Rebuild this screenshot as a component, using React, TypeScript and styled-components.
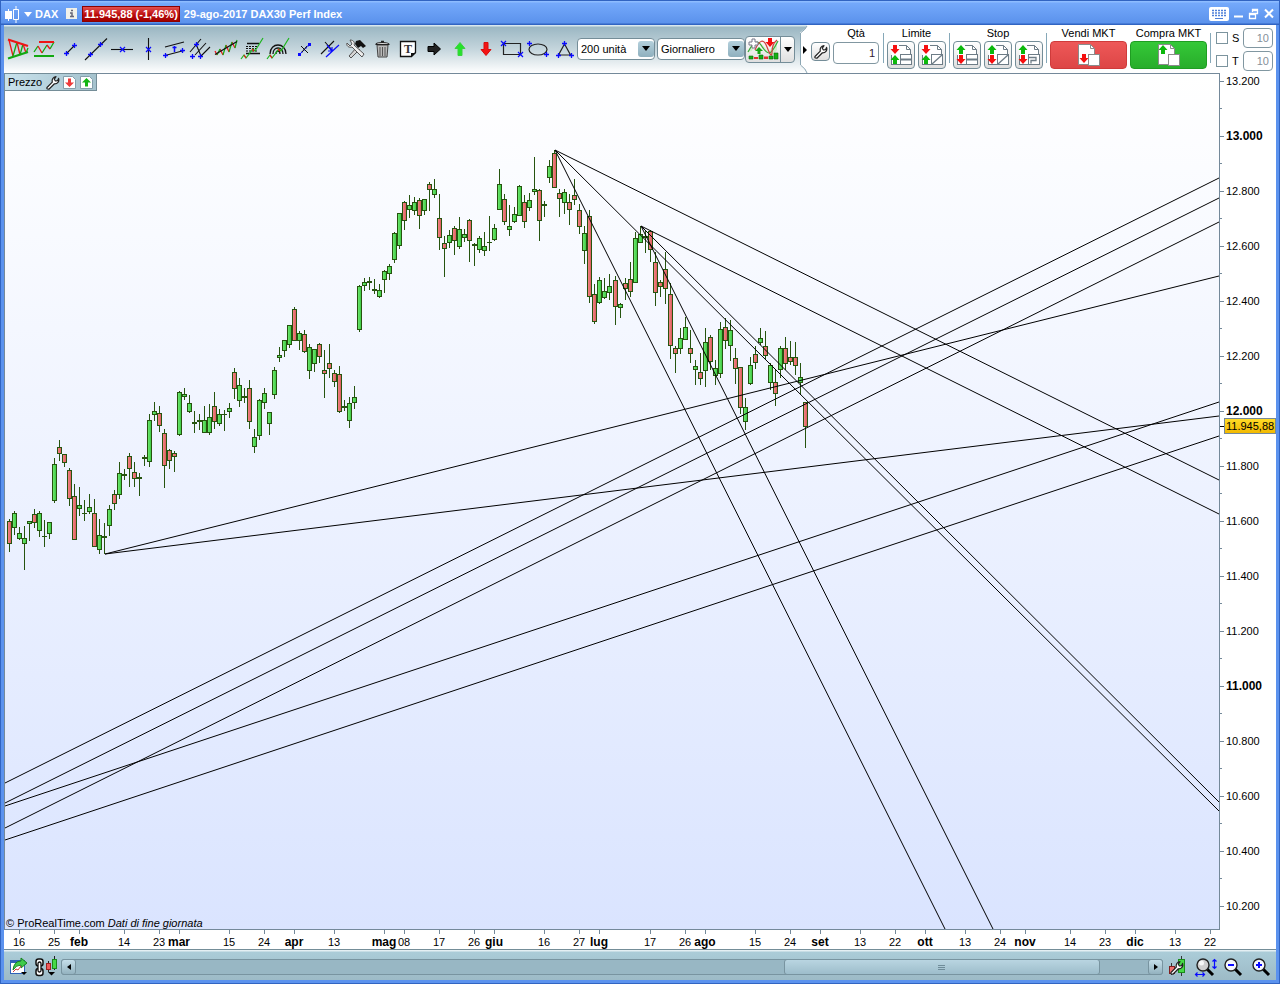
import React from "react";
import styled, { createGlobalStyle, css } from "styled-components";

const GlobalStyle = createGlobalStyle`
  * { box-sizing: border-box; }
  body { margin: 0; background: #fff; font-family: "Liberation Sans", Arial, sans-serif; font-size: 11px; color: #000; }
  button, input, select { font: inherit; color: inherit; margin: 0; padding: 0; }
  svg { display: block; flex: none; }
`;

const WindowFrame = styled.div`
  background: #5b92ee;
  border: 1px solid #3164c2;
  border-top: 0;
  padding: 0 3px 3px;
  min-height: 100vh;
  display: flex;
  flex-direction: column;
`;

const TitleBar = styled.header`
  height: 25px;
  margin: 0 -3px;
  padding: 2px 4px 0 3px;
  display: flex;
  align-items: center;
  color: #fff;
  font-weight: bold;
  background: linear-gradient(#3164c2 0 1px, #8dbcff 1px 2px, #74a9fb 3px, #5b92ec 23px, #3164c2 24px);
`;

const TitleText = styled.span`
  white-space: nowrap;
`;

const Ticker = styled(TitleText)`
  margin: 0 8px 0 3px;
`;

const QuoteBadge = styled.span`
  height: 16px;
  padding: 0 1px;
  margin: 0 4px 0 5px;
  line-height: 15px;
  border: 1px solid #8c0000;
  background: linear-gradient(#e25050, #b80808 60%, #a00000);
  white-space: nowrap;
`;

const PlainButton = styled.button`
  border: 0;
  background: none;
  display: flex;
  align-items: center;
  justify-content: center;
  flex: none;
`;

const WindowButtons = styled.div`
  margin-left: auto;
  display: flex;
  align-items: center;
  gap: 3px;
`;

const Toolbar = styled.div`
  height: 48px;
  display: flex;
  background: linear-gradient(#d9e8ee 0 1px, #9bb7c3 2px, #c4d5dc 24px, #fff 48px);
`;

const Tools = styled.div`
  display: flex;
  align-items: center;
  padding-left: 1px;
`;

const ToolButton = styled(PlainButton)`
  width: 26px;
  height: 28px;
`;

const SelectBox = styled.label<{ $width: number }>`
  position: relative;
  width: ${(p) => p.$width}px;
  height: 22px;
  margin-right: 2px;
  border: 1px solid #748d98;
  border-radius: 4px;
  background: #fff;
  overflow: hidden;
  select {
    appearance: none;
    border: 0;
    width: 100%;
    height: 20px;
    padding-left: 3px;
    background: transparent;
    outline: none;
  }
`;

const SelectArrow = styled.span`
  position: absolute;
  top: 2px;
  right: 0;
  width: 16px;
  height: 16px;
  padding: 5px 4px;
  border-radius: 3px;
  background: linear-gradient(#b4d0dc, #8fb0be);
  pointer-events: none;
`;

const bevel = css`
  border: 1px solid #748d98;
  border-radius: 4px;
  background: linear-gradient(#fff, #dfdfdf);
`;

const IndicatorBox = styled.div`
  ${bevel}
  height: 27px;
  width: 50px;
  margin-left: -2px;
  display: flex;
  button + button { border-left: 1px solid #748d98; width: 14px; }
  button:first-child { width: 34px; }
`;

const Splitter = styled.div`
  width: 12px;
  margin-left: 4px;
  display: flex;
`;

const TradePanel = styled.div`
  flex: 1;
  display: flex;
  gap: 3px;
  padding: 2px 3px 0 0;
  background: #fff;
`;

const Group = styled.div`
  display: flex;
  flex-direction: column;
`;

const QtyGroup = styled(Group)`
  padding-right: 1px;
`;

const Caption = styled.label`
  display: block;
  height: 14px;
  line-height: 13px;
  text-align: center;
  white-space: nowrap;
`;

const Row = styled.div`
  display: flex;
  gap: 3px;
`;

const Separator = styled.div`
  width: 1px;
  height: 30px;
  margin-top: 6px;
  background: #86a8b8;
`;

const WrenchButton = styled(PlainButton)`
  ${bevel}
  width: 19px;
  height: 19px;
  margin-top: 15px;
`;

const NumberField = styled.input<{ $width: number; $dim?: boolean }>`
  width: ${(p) => p.$width}px;
  height: ${(p) => (p.$dim ? 20 : 22)}px;
  border: 1px solid #8197a1;
  border-radius: 4px;
  background: #fff;
  padding-right: 3px;
  text-align: right;
  color: ${(p) => (p.$dim ? "#85909a" : "#301830")};
`;

const QtyField = styled(NumberField)`
  margin-top: 1px;
`;

const OrderButton = styled(PlainButton)`
  ${bevel}
  width: 28px;
  height: 28px;
`;

const MarketButton = styled(PlainButton)<{ $tone: "sell" | "buy" }>`
  width: 77px;
  height: 28px;
  border-radius: 4px;
  border: 1px solid ${(p) => (p.$tone === "sell" ? "#cf3b3b" : "#1f9d22")};
  background: ${(p) =>
    p.$tone === "sell" ? "linear-gradient(#ee5858, #dd4646)" : "linear-gradient(#35c838, #28ad2b)"};
`;

const Options = styled.div`
  display: flex;
  flex-direction: column;
  gap: 3px;
  padding: 1px 0 0 2px;
`;

const OptionRow = styled.div`
  display: flex;
  align-items: center;
  label { width: 15px; padding-left: 4px; }
`;

const CheckBox = styled.input`
  appearance: none;
  width: 12px;
  height: 12px;
  border: 1px solid #7c949e;
  background: #fff;
`;

const ChartArea = styled.main`
  position: relative;
  background: #fff;
  > svg { width: 100%; height: auto; }
`;

const PriceTab = styled.div`
  position: absolute;
  top: 0;
  left: 0;
  height: 18px;
  padding: 0 3px 0 3px;
  display: flex;
  align-items: center;
  gap: 3px;
  border: 1px solid #748d98;
  background: linear-gradient(90deg, #c9e2ec, #a5c2cd);
  button + button + button { margin-left: 1px; }
`;

const BottomBar = styled.footer`
  height: 31px;
  display: flex;
  align-items: center;
  padding: 4px 1px 0 4px;
  border-top: 1px solid #748d98;
  background: linear-gradient(#e4eff3 0 1px, #abccd8 2px, #9dbbc7 29px);
`;

const ScrollBar = styled.div`
  flex: 1;
  display: flex;
  height: 16px;
  margin-left: 3px;
  background: #98b7c4;
  border: 1px solid #7894a0;
  border-radius: 3px;
`;

const ScrollArrow = styled(PlainButton)`
  width: 15px;
  height: 16px;
  margin: -1px;
  border: 1px solid #7894a0;
  border-radius: 3px;
  background: linear-gradient(#c5dfea, #93b2bf);
`;

const Track = styled.div`
  flex: 1;
  display: grid;
  grid-template-columns: 706fr 315fr 49fr;
`;

const Thumb = styled.div`
  grid-column: 2;
  height: 16px;
  margin-top: -1px;
  border: 1px solid #7894a0;
  border-radius: 3px;
  background: linear-gradient(#b9d5e1, #9dbdcb);
  display: flex;
  align-items: center;
  justify-content: center;
`;

const BottomButton = styled(PlainButton)`
  width: 28px;
  height: 24px;
`;

/* ---------- icons ---------- */

const RED = "#ee1515";
const GREEN = "#12a812";
const BLUE = "#0a0aff";
const PAGE = "#6d7c86";

const Icon = ({ children, w = 24, h = 24 }: { children: React.ReactNode; w?: number; h?: number }) => (
  <svg width={w} height={h} viewBox={`0 0 ${w} ${h}`} fill="none" aria-hidden="true">
    {children}
  </svg>
);

const Plus = ({ x, y }: { x: number; y: number }) => (
  <path d={`M${x - 2} ${y + 0.5}h5M${x + 0.5} ${y - 2}v5`} stroke={BLUE} strokeWidth="1.3" />
);
const Cross = ({ x, y }: { x: number; y: number }) => (
  <path d={`M${x - 2} ${y - 2}l5 5m0-5l-5 5`} stroke={BLUE} strokeWidth="1.2" />
);
const Dot = ({ x, y }: { x: number; y: number }) => (
  <rect x={x - 1} y={y - 1} width="3" height="3" fill={BLUE} />
);
const Black = ({ d, w = 1.1 }: { d: string; w?: number }) => <path d={d} stroke="#111" strokeWidth={w} />;

const WrenchShape = () => (
  <path
    d="M2 12.5L7.3 7.2C6.7 4.4 8 2 11 1.6L9.3 4.2 10.4 6 12.6 5.6 13.6 3.4C14.6 6.6 12.4 9 9.4 8.8L3.9 14.2Q1.3 14.4 2 12.5Z"
    fill="#fff"
    stroke="#222"
    strokeWidth="1.2"
    strokeLinejoin="round"
  />
);

const Up = ({ x, y }: { x: number; y: number }) => (
  <path d={`M${x} ${y}l4.5 5h-2.500v4h-4v-4h-2.500z`} fill="#0cb80c" />
);
const Down = ({ x, y }: { x: number; y: number }) => (
  <path d={`M${x} ${y}l4.5-5h-2.500v-4h-4v4h-2.500z`} fill="#f50f0f" />
);

const TOOLS: { label: string; art: React.ReactNode }[] = [
  {
    label: "Triangolo di tendenza",
    art: (
      <>
        <path d="M3 3l4 16M11 5l3 13M17 7l3 9" stroke={RED} strokeWidth="1.3" />
        <path d="M7 19l4-14M14 18l3-11M20 16l2-5" stroke={GREEN} strokeWidth="1.3" />
        <path d="M2 2.5l20 6.500" stroke={RED} strokeWidth="2.2" />
        <path d="M2 21.5l20-6.500" stroke={GREEN} strokeWidth="2.2" />
      </>
    ),
  },
  {
    label: "Supporti e resistenze",
    art: (
      <>
        <path d="M2 15l4-6M10 16l5-8M18 12l4-7" stroke={GREEN} strokeWidth="1.3" />
        <path d="M6 9l4 7M15 8l3 4" stroke={RED} strokeWidth="1.3" />
        <path d="M7 5h15" stroke={RED} strokeWidth="2" />
        <path d="M2 19h20" stroke={GREEN} strokeWidth="2" />
      </>
    ),
  },
  { label: "Segmento", art: <><Black d="M8 17l9-9" /><Plus x={8} y={16} /><Plus x={16} y={8} /></> },
  { label: "Retta", art: <><Black d="M1 23L23 1.5" /><Plus x={6} y={17} /><Plus x={16} y={7} /></> },
  { label: "Linea orizzontale", art: <><Black d="M1 12.5h22" /><Cross x={12} y={12} /></> },
  { label: "Linea verticale", art: <><Black d="M12.5 1v22" /><Cross x={12} y={12} /></> },
  {
    label: "Canale",
    art: (
      <>
        <Black d="M3 10l19-5M3 18.5l19-5" />
        <path d="M12.5 9v6M10.5 10.5h4" stroke={BLUE} strokeWidth="1.5" />
        <Plus x={3} y={18} /><Plus x={20} y={13} />
      </>
    ),
  },
  {
    label: "Forchetta",
    art: (
      <>
        <Black d="M2 15L13 2M8 7l5 12M7 18L18 6M13 19l9-9" />
        <Plus x={8} y={7} /><Plus x={4} y={19} /><Plus x={12} y={19} />
      </>
    ),
  },
  {
    label: "Regressione lineare",
    art: (
      <>
        <path d="M1 14l2 4M6 12l3 6M12 8l3 7M18 5l3 6" stroke={RED} strokeWidth="1.2" />
        <path d="M3 18l3-6M9 18l3-10M15 15l3-10M21 11l2-8" stroke={GREEN} strokeWidth="1.2" />
        <Black d="M1 17.5L23 4.5" w={1.3} />
      </>
    ),
  },
  {
    label: "Ritracciamenti di Fibonacci",
    art: (
      <>
        <Black d="M7 6.5h12M6 16.5h14" w={1.6} />
        <path d="M6 9.5h12M6 11.5h12M6 14h12" stroke="#111" strokeWidth="1.2" strokeDasharray="2 1" />
        <path d="M1 22l3-4 2 3 7-9 2 2 8-13" stroke="#1db51d" strokeWidth="1.2" />
        <path d="M4 18l2 3M12 12l2 2" stroke={RED} strokeWidth="1.2" />
      </>
    ),
  },
  {
    label: "Archi di Fibonacci",
    art: (
      <>
        <Black d="M4 17c0-12 16-12 16 0M7 17c0-8 10-8 10 0M10 17c0-4 4-4 4 0" w={1.3} />
        <path d="M1 22l3-4 2 3 7-9 2 2 8-13" stroke="#1db51d" strokeWidth="1.2" />
        <path d="M4 18l2 3M12 12l2 2" stroke={RED} strokeWidth="1.2" />
      </>
    ),
  },
  {
    label: "Estensione",
    art: (
      <>
        <path d="M7 18L18 7" stroke={BLUE} strokeWidth="1.2" strokeDasharray="2 1" />
        <Black d="M9 9l7 7M10 15l5-6" w={1} />
        <Dot x={7} y={17} /><Dot x={17} y={7} />
      </>
    ),
  },
  {
    label: "Parallela",
    art: (
      <>
        <Black d="M3 17L16 4M7 5l7 8" />
        <path d="M8 20L21 8M9 8l5 6M14 10v4h-4" stroke={BLUE} strokeWidth="1.2" />
      </>
    ),
  },
  {
    label: "Strumenti",
    art: (
      <>
        <path d="M13 10L5 19l2 2 9-9" fill="#d4d4d4" stroke="#555" />
        <path d="M12 4l4-1 6 6-3 2-2-2-3 2-3-4z" fill="#111" />
        <path d="M3 6l3 3 2-2-2-4c4 0 5 3 4 5l10 9-2 3-10-10c-3 1-6-1-5-4z" fill="#eee" stroke="#555" />
      </>
    ),
  },
  {
    label: "Elimina",
    art: (
      <>
        <path d="M7 8h11l-1 12H8z" fill="#b9b9b9" stroke="#444" />
        <path d="M10 10v9M12.5 10v9M15 10v9" stroke="#555" />
        <path d="M6 7.5q0-2 6.500-2t6.500 2z" fill="#ddd" stroke="#222" strokeWidth="1.2" />
        <path d="M11 4.5h3" stroke="#222" strokeWidth="1.5" />
      </>
    ),
  },
  {
    label: "Testo",
    art: (
      <>
        <path d="M4.5 4.5h15v11l-4 4h-11z" fill="#fff" stroke="#111" strokeWidth="1.3" />
        <path d="M15 20v-4h5z" fill="#111" />
        <text x="12" y="16" textAnchor="middle" fontFamily="Liberation Serif, serif" fontWeight="bold" fontSize="12" fill="#333">T</text>
      </>
    ),
  },
  { label: "Freccia destra", art: <path d="M6 9.5h6V6l6.500 6-6.500 6v-3.500H6z" fill="#222" stroke="#000" /> },
  { label: "Freccia su", art: <path d="M12 5.5l5 6h-3v7h-4v-7H7z" fill="#26e22b" stroke="#3bd23f" /> },
  { label: "Freccia giù", art: <path d="M12 18.5l5-6h-3v-7h-4v7H7z" fill="#f31414" stroke="#d80c0c" /> },
  { label: "Rettangolo", art: <><path d="M3.5 6.5h17v11h-17z" stroke="#222" strokeWidth="1.2" /><Cross x={3} y={6} /><Cross x={20} y={17} /></> },
  { label: "Ellisse", art: <><ellipse cx="12" cy="12.5" rx="9" ry="5.5" stroke="#222" strokeWidth="1.2" /><Plus x={3} y={6} /><Plus x={20} y={17} /></> },
  { label: "Triangolo", art: <><path d="M12.5 7l6 11h-12z" stroke="#222" strokeWidth="1.2" /><Plus x={12} y={6} /><Plus x={6} y={18} /><Plus x={19} y={18} /></> },
];

const ArrowDown = () => (
  <Icon w={8} h={5}><path d="M0 0h8L4 5z" fill="#000" /></Icon>
);

const OrderIcon = ({ first, extra }: { first: "up" | "down"; extra: "line" | "slash" | "step" }) => (
  <Icon>
    <path d="M2.5 21.5v-19h15l4 4v5H12v10z" fill="#fff" />
    <path d="M10 2.5h7.5l4 4V12M2.5 22V12M2.5 21.5h9M17.500 2.500v4h4" stroke={PAGE} />
    {first === "down" ? <><Down x={6} y={11} /><Up x={6} y={12} /></> : <><Up x={6} y={2} /><Down x={6} y={21} /></>}
    <rect x="11.5" y="11.5" width="11" height="10" fill="#fff" stroke={PAGE} />
    {extra === "line" && <path d="M12 16.5h10" stroke={PAGE} strokeWidth="2" />}
    {extra === "slash" && <path d="M12 21l10-9" stroke={PAGE} strokeWidth="1.3" />}
    {extra === "step" && <path d="M12 14.5h7v3h-5v3" stroke={PAGE} strokeWidth="1.3" />}
  </Icon>
);

const MarketIcon = ({ buy }: { buy?: boolean }) => (
  <Icon>
    <path d="M1.5 1.5h12l4 4v16h-16z" fill="#fff" stroke="#8b8b8b" />
    <path d="M13.5 1.5v4h4" stroke="#8b8b8b" />
    {buy ? <Up x={6} y={2} /> : <Down x={7} y={20} />}
    <rect x="11.5" y="11.5" width="11" height="11" fill="#fff" stroke="#8b8b8b" />
  </Icon>
);

const PageArrow = ({ up }: { up?: boolean }) => (
  <Icon w={13} h={13}>
    <path d="M.5.5h9l3 3v9H.5z" fill="#fff" stroke="#849eab" />
    {up ? <path d="M6.5 2l4.500 4.500h-3v4h-3v-4H2z" fill="#14b414" /> : <path d="M6.5 11l4.500-4.500h-3v-4h-3v4H2z" fill="#ee3a3a" />}
  </Icon>
);

const Magnifier = ({ sign, big }: { sign?: "+" | "-"; big?: boolean }) => (
  <Icon>
    <path d="M14 14l6 6" stroke="#000" strokeWidth="3" />
    <circle cx="10" cy="10" r="6" fill={big ? "#cfcfcf" : "#f4f6fb"} stroke="#222" strokeWidth="1.4" />
    {big && <circle cx="8.5" cy="8" r="2.5" fill="#f7f7f7" />}
    {sign && <path d={sign === "+" ? "M7 10h6M10 7v6" : "M7 10h6"} stroke={BLUE} strokeWidth="2" />}
    {big && <path d="M21.5 5v8M19.5 6.5l2-2 2 2M19.5 11.5l2 2 2-2M3 19.5h8M4.5 17.5l-2 2 2 2M9.5 17.5l2 2-2 2" stroke={BLUE} strokeWidth="1.2" />}
  </Icon>
);

/* ---------- chart data: centre x, high, body top, body bottom, low, tone ---------- */

type Candle = [number, number, number, number, number, "g" | "r"];

const CANDLES: Candle[] = [
  [9, 519, 521, 544, 552, "r"], [14, 511, 513, 528, 535, "g"], [19, 527, 533, 539, 540, "g"], [24, 526, 538, 544, 570, "g"],
  [29, 521, 521, 524, 541, "g"], [34, 509, 514, 523, 528, "r"], [39, 511, 513, 531, 537, "g"], [44, 520, 536, 537, 547, "g"],
  [49, 522, 522, 534, 539, "g"], [54, 458, 464, 501, 503, "g"], [59, 440, 447, 454, 461, "r"], [64, 454, 454, 463, 467, "r"],
  [69, 468, 470, 499, 506, "r"], [74, 484, 496, 540, 540, "r"], [79, 487, 505, 509, 516, "g"], [84, 500, 513, 514, 521, "g"],
  [89, 494, 507, 512, 514, "g"], [94, 499, 513, 547, 547, "r"], [99, 519, 535, 550, 554, "g"], [104, 523, 536, 538, 554, "g"],
  [109, 505, 509, 526, 536, "g"], [114, 490, 494, 504, 510, "r"], [119, 462, 473, 495, 499, "g"], [124, 469, 474, 476, 480, "g"],
  [129, 453, 456, 469, 487, "r"], [134, 462, 472, 479, 487, "r"], [139, 473, 477, 479, 496, "g"], [144, 455, 457, 459, 466, "g"],
  [149, 414, 420, 462, 467, "g"], [154, 402, 411, 415, 421, "g"], [159, 406, 413, 426, 432, "r"], [164, 429, 433, 466, 488, "r"],
  [169, 449, 450, 461, 469, "r"], [174, 451, 453, 457, 472, "r"], [179, 391, 392, 435, 436, "g"], [184, 388, 394, 397, 400, "g"],
  [189, 395, 403, 412, 413, "g"], [194, 411, 422, 424, 433, "g"], [199, 414, 420, 422, 430, "g"], [204, 406, 420, 433, 433, "g"],
  [209, 404, 417, 433, 435, "g"], [214, 392, 406, 422, 429, "r"], [219, 409, 414, 424, 426, "g"], [224, 410, 414, 415, 431, "g"],
  [229, 403, 408, 412, 418, "g"], [234, 368, 372, 389, 399, "r"], [239, 378, 385, 401, 407, "g"], [244, 388, 396, 398, 403, "g"],
  [249, 380, 388, 422, 429, "r"], [254, 429, 437, 447, 453, "g"], [259, 399, 400, 436, 440, "g"], [264, 388, 393, 403, 409, "g"],
  [269, 412, 412, 424, 435, "g"], [274, 367, 370, 395, 399, "g"], [279, 347, 355, 358, 362, "g"], [284, 340, 340, 351, 357, "g"],
  [289, 325, 325, 345, 348, "g"], [294, 307, 309, 341, 341, "r"], [299, 331, 333, 341, 350, "g"], [304, 330, 334, 352, 353, "r"],
  [309, 344, 347, 371, 379, "g"], [314, 349, 349, 364, 372, "g"], [319, 343, 344, 357, 363, "r"], [324, 350, 370, 374, 398, "r"],
  [329, 344, 363, 369, 378, "r"], [334, 370, 373, 382, 387, "r"], [339, 366, 374, 412, 413, "r"], [344, 400, 406, 408, 411, "g"],
  [349, 397, 403, 421, 428, "g"], [354, 386, 397, 403, 409, "g"], [359, 285, 286, 330, 332, "g"], [364, 278, 282, 286, 291, "g"],
  [369, 277, 281, 283, 290, "g"], [374, 279, 289, 291, 294, "g"], [379, 284, 290, 297, 298, "g"], [384, 270, 271, 280, 293, "g"],
  [389, 264, 266, 274, 280, "g"], [394, 232, 233, 260, 263, "g"], [399, 213, 213, 246, 249, "g"], [404, 201, 202, 221, 230, "r"],
  [409, 195, 205, 210, 218, "g"], [414, 197, 202, 211, 215, "g"], [419, 198, 200, 216, 229, "r"], [424, 199, 199, 211, 215, "g"],
  [429, 182, 184, 190, 211, "r"], [434, 179, 189, 195, 198, "g"], [439, 194, 218, 238, 250, "r"], [444, 236, 243, 249, 277, "r"],
  [449, 230, 235, 243, 248, "g"], [454, 226, 228, 241, 255, "r"], [459, 217, 229, 247, 249, "g"], [464, 229, 234, 238, 242, "g"],
  [469, 219, 220, 241, 262, "r"], [474, 243, 244, 246, 266, "g"], [479, 236, 238, 250, 253, "g"], [484, 232, 246, 251, 256, "g"],
  [489, 216, 242, 243, 251, "g"], [494, 224, 228, 240, 241, "g"], [499, 169, 184, 210, 210, "g"], [504, 194, 199, 222, 225, "r"],
  [509, 205, 226, 230, 236, "g"], [514, 207, 214, 222, 223, "g"], [519, 185, 186, 216, 216, "g"], [524, 195, 202, 222, 228, "r"],
  [529, 193, 200, 208, 211, "g"], [534, 157, 189, 192, 195, "g"], [539, 189, 190, 221, 241, "r"], [544, 201, 204, 206, 217, "g"],
  [549, 160, 166, 178, 183, "g"], [554, 150, 153, 188, 188, "r"], [559, 189, 193, 199, 217, "r"], [564, 189, 192, 203, 214, "g"],
  [569, 194, 202, 210, 225, "r"], [574, 179, 195, 200, 205, "r"], [579, 204, 210, 227, 234, "r"], [584, 226, 233, 251, 264, "g"],
  [589, 210, 216, 297, 303, "r"], [594, 284, 294, 322, 324, "r"], [599, 277, 280, 303, 304, "g"], [604, 278, 291, 298, 299, "g"],
  [609, 274, 286, 293, 300, "g"], [615, 276, 280, 307, 325, "r"], [620, 303, 304, 308, 318, "g"], [625, 278, 283, 289, 300, "r"],
  [630, 262, 279, 292, 297, "r"], [635, 232, 238, 283, 283, "g"], [640, 226, 234, 243, 243, "g"], [645, 230, 236, 238, 253, "r"],
  [650, 230, 231, 250, 262, "r"], [655, 252, 262, 293, 306, "r"], [660, 280, 282, 287, 297, "r"], [665, 252, 269, 289, 304, "r"],
  [670, 283, 294, 346, 359, "r"], [675, 346, 348, 354, 373, "r"], [680, 328, 338, 349, 354, "g"], [685, 317, 327, 340, 340, "g"],
  [690, 330, 348, 354, 363, "r"], [695, 360, 366, 370, 385, "g"], [700, 353, 372, 379, 385, "r"], [705, 328, 342, 371, 387, "g"],
  [710, 335, 337, 362, 370, "r"], [715, 360, 368, 376, 385, "g"], [720, 322, 329, 374, 378, "g"], [725, 318, 327, 341, 349, "r"],
  [730, 320, 330, 346, 361, "g"], [735, 348, 358, 369, 384, "r"], [740, 367, 367, 408, 414, "r"], [745, 398, 407, 422, 430, "g"],
  [750, 357, 365, 384, 385, "g"], [755, 346, 354, 363, 369, "r"], [760, 328, 338, 343, 345, "g"], [765, 331, 346, 356, 360, "r"],
  [770, 363, 365, 383, 390, "g"], [775, 370, 382, 394, 406, "r"], [780, 346, 348, 370, 378, "g"], [785, 337, 348, 364, 370, "r"],
  [790, 341, 357, 362, 365, "r"], [795, 342, 357, 366, 375, "r"], [800, 363, 377, 383, 395, "g"], [805, 402, 402, 427, 448, "r"],
];

const TRENDS: [number, number, number, number][] = [
  [555, 150, 1219, 480], [555, 150, 1219, 811], [555, 150, 945, 929],
  [641, 226, 1219, 514], [641, 226, 1219, 802], [641, 226, 993, 929],
  [5, 783, 1219, 178], [5, 803, 1219, 198], [5, 828, 1219, 222],
  [105, 554, 1219, 276], [105, 554, 1219, 416],
  [5, 806, 1219, 402], [5, 840, 1219, 436],
];

const PRICES = Array.from({ length: 16 }, (_, i) => 13200 - i * 200);

const DATES: [number, string][] = [
  [19, "16"], [54, "25"], [79, "feb"], [124, "14"], [159, "23"], [179, "mar"], [229, "15"], [264, "24"], [294, "apr"],
  [334, "13"], [384, "mag"], [404, "08"], [439, "17"], [474, "26"], [494, "giu"], [544, "16"], [579, "27"], [599, "lug"],
  [650, "17"], [685, "26"], [705, "ago"], [755, "15"], [790, "24"], [820, "set"], [860, "13"], [895, "22"], [925, "ott"],
  [965, "13"], [1000, "24"], [1025, "nov"], [1070, "14"], [1105, "23"], [1135, "dic"], [1175, "13"], [1210, "22"],
];

const AxisText = styled.text<{ $strong?: boolean }>`
  font-size: ${(p) => (p.$strong ? 12 : 11)}px;
  font-weight: ${(p) => (p.$strong ? "bold" : "normal")};
`;

const formatPrice = (p: number) => `${Math.floor(p / 1000)}.${String(p % 1000).padStart(3, "0")}`;

const Chart = () => (
  <svg viewBox="4 73 1272 876" role="img" aria-label="Grafico DAX giornaliero">
    <defs>
      <linearGradient id="sky" x1="0" y1="0" x2="0" y2="1">
        <stop offset="0" stopColor="#ffffff" />
        <stop offset="1" stopColor="#dae4ff" />
      </linearGradient>
      <linearGradient id="rise"><stop offset="0" stopColor="#6ee86e" /><stop offset="1" stopColor="#3fcb45" /></linearGradient>
      <linearGradient id="fall"><stop offset="0" stopColor="#f28585" /><stop offset="1" stopColor="#dc5e5e" /></linearGradient>
      <linearGradient id="tag" x1="0" y1="0" x2="0" y2="1"><stop offset="0" stopColor="#ffdc28" /><stop offset="1" stopColor="#f2b800" /></linearGradient>
    </defs>
    <rect x="4" y="73" width="1216" height="857" fill="#74899a" />
    <rect x="5" y="74" width="1214" height="855" fill="url(#sky)" />
    <g shapeRendering="crispEdges">
      {CANDLES.map(([x, high, top, bottom, low, tone]) => (
        <g key={x}>
          <rect x={x} y={high} width="1" height={low - high} fill="#26540f" />
          <rect x={x - 2} y={top} width="5" height={bottom - top} fill="#26540f" />
          {bottom - top > 2 && (
            <rect x={x - 1} y={top + 1} width="3" height={bottom - top - 2} fill={tone === "g" ? "url(#rise)" : "url(#fall)"} />
          )}
        </g>
      ))}
    </g>
    {TRENDS.map(([x1, y1, x2, y2], i) => (
      <line key={i} x1={x1} y1={y1} x2={x2} y2={y2} stroke="#000" />
    ))}
    <g shapeRendering="crispEdges" fill="#74899a">
      {PRICES.map((p, i) => (
        <g key={p}>
          <rect x="1220" y={81 + i * 55} width="4" height="1" />
          {i < 15 && <rect x="1220" y={108 + i * 55} width="2" height="1" />}
        </g>
      ))}
      {DATES.map(([x]) => <rect key={x} x={x} y="930" width="1" height="4" />)}
    </g>
    {PRICES.map((p, i) => (
      <AxisText key={p} x="1226" y={85 + i * 55} $strong={p % 1000 === 0}>{formatPrice(p)}</AxisText>
    ))}
    {DATES.map(([x, t]) => (
      <AxisText key={x} x={x} y="946" textAnchor="middle" $strong={/[a-z]/.test(t)}>{t}</AxisText>
    ))}
    <path d="M1220 426.5h4" stroke="#000" />
    <rect x="1224.5" y="418.5" width="51" height="15" fill="url(#tag)" stroke="#74899a" />
    <AxisText x="1226" y="430">11.945,88</AxisText>
    <AxisText x="6" y="927">
      © ProRealTime.com
      <tspan dx="3" fontStyle="italic">Dati di fine giornata</tspan>
    </AxisText>
  </svg>
);

export default function App() {
  return (
    <>
      <GlobalStyle />
      <WindowFrame>
        <TitleBar>
          <PlainButton aria-label="Tipo di grafico">
            <Icon w={28} h={18}>
              <path d="M1 6h7v8H1zM4 4h1v12H4z" fill="#fff" />
              <path d="M9.5 4.5h5v10h-5zM12 1v3M12 15v3" stroke="#fff" />
              <path d="M20 7h8l-4 5z" fill="#fff" />
            </Icon>
          </PlainButton>
          <Ticker>DAX</Ticker>
          <PlainButton aria-label="Informazioni">
            <Icon w={11} h={11}>
              <rect width="11" height="11" fill="#f1f1ea" />
              <path d="M4 5h2v3M4 8.5h4M5 2.5h2" stroke="#667" strokeWidth="1.5" />
            </Icon>
          </PlainButton>
          <QuoteBadge>11.945,88 (-1,46%)</QuoteBadge>
          <TitleText>29-ago-2017 DAX30 Perf Index</TitleText>
          <WindowButtons>
            <PlainButton aria-label="Tastiera">
              <Icon w={20} h={14}>
                <rect width="20" height="14" rx="2" fill="#fff" />
                <path d="M3 3.5h14M3 6h14M3 8.5h14" stroke="#4f80d8" strokeWidth="1.5" strokeDasharray="2 1" />
                <path d="M6 11.5h8" stroke="#4f80d8" />
              </Icon>
            </PlainButton>
            <PlainButton aria-label="Riduci"><Icon w={13} h={14}><path d="M2 9.5h9" stroke="#fff" strokeWidth="2" /></Icon></PlainButton>
            <PlainButton aria-label="Ripristina">
              <Icon w={12} h={14}>
                <path d="M4.5 5V2.5h5v4H8M4 3.5h6M1.5 6.5h6v5h-6zM1 7.5h7" stroke="#fff" strokeWidth="1.3" />
              </Icon>
            </PlainButton>
            <PlainButton aria-label="Chiudi"><Icon w={12} h={14}><path d="M2 2.5l8 8m0-8l-8 8" stroke="#fff" strokeWidth="2" /></Icon></PlainButton>
          </WindowButtons>
        </TitleBar>

        <Toolbar>
          <Tools>
            {TOOLS.map((t) => (
              <ToolButton key={t.label} aria-label={t.label}><Icon>{t.art}</Icon></ToolButton>
            ))}
            <SelectBox $width={78}>
              <select aria-label="Unità"><option>200 unità</option></select>
              <SelectArrow><ArrowDown /></SelectArrow>
            </SelectBox>
            <SelectBox $width={88}>
              <select aria-label="Periodo"><option>Giornaliero</option></select>
              <SelectArrow><ArrowDown /></SelectArrow>
            </SelectBox>
            <IndicatorBox>
              <PlainButton aria-label="Aggiungi indicatore">
                <Icon w={32} h={24}>
                  <path d="M1 15q7-15 13-6t8 6 8-12v10q-5 8-9 2t-8-9-8 8z" fill="#cfeccb" />
                  <path d="M1 15q8-15 13-7t8 8 9-12" stroke="#35a835" strokeWidth="1.2" />
                  <path d="M8 13q7-16 12-3t5 5 5-12" stroke="#cf3f3f" strokeWidth="1.2" />
                  <path d="M5 2h3v3h3v3H8v3H5V8H2V5h3z" fill="#fff" stroke="#778" />
                  <Down x={23} y={10} />
                  <path d="M12 10l4 4h-2.500v3h-3v-3H8z" fill="#14a414" />
                  <path d="M2 19h4v3H2zM12 18h4v4h-4zM22 19h4v3h-4zM27 16h4v6h-4z" fill="#13b013" stroke="#0a6a0a" strokeWidth=".6" />
                  <path d="M7 20h4v2H7zM17 19.5h4V22h-4z" fill="#e03030" />
                </Icon>
              </PlainButton>
              <PlainButton aria-label="Altri indicatori"><ArrowDown /></PlainButton>
            </IndicatorBox>
          </Tools>
          <Splitter>
            <Icon w={12} h={48}>
              <path d="M8 0Q8 3 1 7.5v33Q8 44 8 48H12V0z" fill="#fff" />
              <path d="M8 1Q7 4 1.5 8v32Q7 44 8 48" stroke="#8ba6b3" />
              <path d="M4 21l4 4-4 4z" fill="#000" />
            </Icon>
          </Splitter>
          <TradePanel>
            <WrenchButton aria-label="Impostazioni ordini"><Icon w={15} h={15}><WrenchShape /></Icon></WrenchButton>
            <QtyGroup>
              <Caption htmlFor="qty">Qtà</Caption>
              <QtyField id="qty" $width={46} defaultValue="1" />
            </QtyGroup>
            <Separator />
            <Group>
              <Caption as="span">Limite</Caption>
              <Row>
                <OrderButton aria-label="Limite 1"><OrderIcon first="down" extra="line" /></OrderButton>
                <OrderButton aria-label="Limite 2"><OrderIcon first="down" extra="slash" /></OrderButton>
              </Row>
            </Group>
            <Separator />
            <Group>
              <Caption as="span">Stop</Caption>
              <Row>
                <OrderButton aria-label="Stop 1"><OrderIcon first="up" extra="line" /></OrderButton>
                <OrderButton aria-label="Stop 2"><OrderIcon first="up" extra="slash" /></OrderButton>
                <OrderButton aria-label="Stop 3"><OrderIcon first="up" extra="step" /></OrderButton>
              </Row>
            </Group>
            <Separator />
            <Group>
              <Caption htmlFor="sell">Vendi MKT</Caption>
              <MarketButton id="sell" $tone="sell"><MarketIcon /></MarketButton>
            </Group>
            <Group>
              <Caption htmlFor="buy">Compra MKT</Caption>
              <MarketButton id="buy" $tone="buy"><MarketIcon buy /></MarketButton>
            </Group>
            <Separator />
            <Options>
              {["S", "T"].map((k) => (
                <OptionRow key={k}>
                  <CheckBox type="checkbox" id={`opt${k}`} />
                  <label htmlFor={`opt${k}`}>{k}</label>
                  <NumberField $width={30} $dim defaultValue="10" aria-label={`Valore ${k}`} />
                </OptionRow>
              ))}
            </Options>
          </TradePanel>
        </Toolbar>

        <ChartArea>
          <Chart />
          <PriceTab>
            <span>Prezzo</span>
            <PlainButton aria-label="Impostazioni prezzo"><Icon w={15} h={15}><WrenchShape /></Icon></PlainButton>
            <PlainButton aria-label="Sposta giù"><PageArrow /></PlainButton>
            <PlainButton aria-label="Sposta su"><PageArrow up /></PlainButton>
          </PriceTab>
        </ChartArea>

        <BottomBar>
          <PlainButton aria-label="Condividi">
            <Icon>
              <rect x="2.5" y="5.5" width="14" height="13" fill="#fff" stroke="#2f62b8" />
              <path d="M3 7h13" stroke="#2f62b8" strokeWidth="2" />
              <path d="M5 15q1-9 8-9V3l6 5-6 5v-3q-5 0-8 5z" fill="#3fcb4a" stroke="#16801f" />
              <path d="M5 17l3-3 2 1 3-4" stroke="#d43b3b" />
              <path d="M13 17h6l-3 3z" fill="#000" />
            </Icon>
          </PlainButton>
          <PlainButton aria-label="Collega">
            <Icon w={26}>
              <rect x="4" y="4" width="7" height="7" rx="2.5" fill="#fff" stroke="#111" strokeWidth="1.5" />
              <rect x="4" y="13.5" width="7" height="7" rx="2.5" fill="#fff" stroke="#111" strokeWidth="1.5" />
              <rect x="6" y="7" width="3" height="10" rx="1.5" fill="#fff" stroke="#111" strokeWidth="1.3" />
              <path d="M16.5 6v11M22.5 1v14" stroke="#222" />
              <rect x="14.5" y="8.5" width="4" height="6" fill="#ee5b5b" stroke="#a02020" />
              <rect x="20.5" y="4.5" width="4" height="9" fill="#46d946" stroke="#1a8c1a" />
              <path d="M16 17h7l-3.500 3.500z" fill="#000" />
            </Icon>
          </PlainButton>
          <ScrollBar>
            <ScrollArrow aria-label="Scorri a sinistra"><Icon w={4} h={6}><path d="M4 0v6L0 3z" fill="#000" /></Icon></ScrollArrow>
            <Track>
              <Thumb><Icon w={7} h={7}><path d="M0 1.5h7M0 3.5h7M0 5.5h7" stroke="#6f8c99" /></Icon></Thumb>
            </Track>
            <ScrollArrow aria-label="Scorri a destra"><Icon w={4} h={6}><path d="M0 0v6l4-3z" fill="#000" /></Icon></ScrollArrow>
          </ScrollBar>
          <BottomButton aria-label="Configura">
            <Icon>
              <path d="M6.5 8v12M16.5 1v20" stroke="#333" />
              <rect x="13.5" y="4.5" width="6" height="13" fill="#46d946" stroke="#1a8c1a" />
              <rect x="4.5" y="11.5" width="5" height="7" fill="#ee7070" stroke="#802020" />
              <g transform="translate(4 5)"><WrenchShape /></g>
            </Icon>
          </BottomButton>
          <BottomButton aria-label="Adatta"><Magnifier big /></BottomButton>
          <BottomButton aria-label="Riduci zoom"><Magnifier sign="-" /></BottomButton>
          <BottomButton aria-label="Aumenta zoom"><Magnifier sign="+" /></BottomButton>
        </BottomBar>
      </WindowFrame>
    </>
  );
}
